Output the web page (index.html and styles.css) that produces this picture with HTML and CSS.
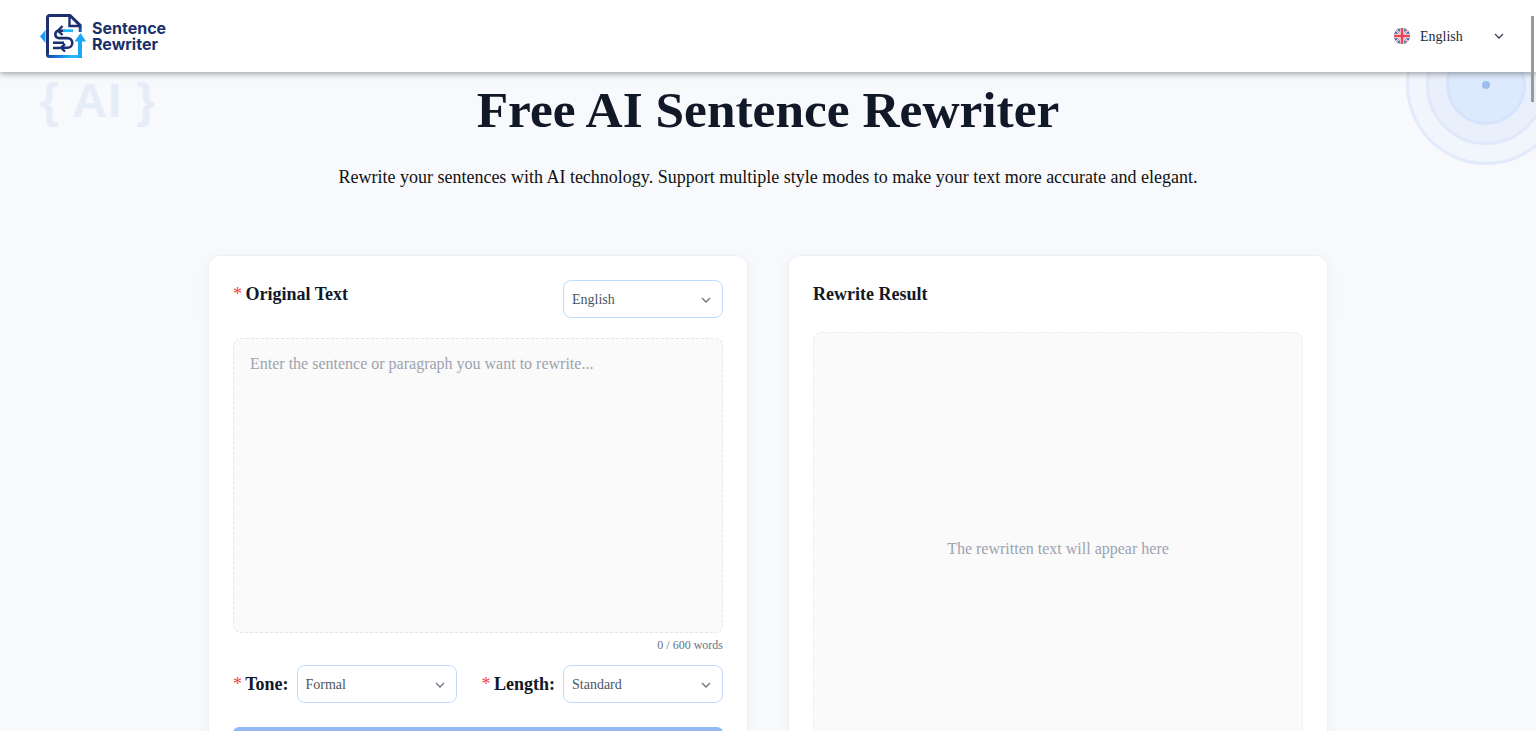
FILE: index.html
```html
<!DOCTYPE html>
<html lang="en">
<head>
    <meta charset="UTF-8">
    <meta name="viewport" content="width=device-width, initial-scale=1.0">
    <title>Free AI Sentence Rewriter</title>
    <link rel="stylesheet" href="styles.css">
</head>
<body>
    <header class="header">
        <a class="logo" href="#">
            <svg class="logo-icon" width="48" height="48" viewBox="0 0 48 48" fill="none">
                <defs>
                    <linearGradient id="docStroke" x1="0" y1="0" x2="0.7" y2="1">
                        <stop offset="0.6" stop-color="#1b2f72"/>
                        <stop offset="0.8" stop-color="#1670e0"/>
                        <stop offset="1" stop-color="#22b8f5"/>
                    </linearGradient>
                </defs>
                <path d="M40.200 20V13.500L30 3.500H9.500a2 2 0 0 0-2 2V42.500a2 2 0 0 0 2 2H38" stroke="url(#docStroke)" stroke-width="3"/>
                <path d="M29.500 4V14H40" stroke="#1b2f72" stroke-width="2.400"/>
                <path d="M5.500 18v13L0 24.500z" fill="#1e9bf5"/>
                <path d="M40.500 21L34.500 29.500H38V46H42V29.500H46z" fill="#18a8f5"/>
                <path d="M25 18.700H19a3.700 3.700 0 0 0 0 7.400H27.500a4.800 4.800 0 0 1 0 9.600H22" stroke="#1b2f72" stroke-width="2.600"/>
                <path d="M22.500 14L18 18.700L22.500 23" stroke="#1b2f72" stroke-width="2.400"/>
                <path d="M23 18.700H33" stroke="#22b8f5" stroke-width="2.800"/>
                <path d="M25 32L21 35.700L25 39.500" stroke="#1b2f72" stroke-width="2.400"/>
                <path d="M13 30.700H24M13 36H20" stroke="#1b2f72" stroke-width="2.400"/>
            </svg>
            <span class="logo-text">Sentence<br>Rewriter</span>
        </a>
        <div class="lang-switch">
            <svg class="flag" width="16" height="16" viewBox="0 0 16 16">
                <defs>
                    <clipPath id="flagClip"><circle cx="8" cy="8" r="8"/></clipPath>
                </defs>
                <g clip-path="url(#flagClip)">
                    <rect width="16" height="16" fill="#3b5ba9"/>
                    <path d="M0 0L16 16M16 0L0 16" stroke="#f3f3f3" stroke-width="2"/>
                    <path d="M0 0L16 16M16 0L0 16" stroke="#e8505b" stroke-width="0.700"/>
                    <path d="M8 0V16M0 8H16" stroke="#f3f3f3" stroke-width="4.600"/>
                    <path d="M8 0V16M0 8H16" stroke="#ee4452" stroke-width="2.600"/>
                </g>
            </svg>
            <span class="lang-name">English</span>
            <svg class="chevron chevron-dark" width="12" height="12" viewBox="0 0 12 12" fill="none"><path d="M2 4l4 4 4-4"/></svg>
        </div>
    </header>

    <div class="deco-ai">{ AI }</div>
    <div class="deco-rings">
        <div class="ring ring-outer"></div>
        <div class="ring ring-middle"></div>
        <div class="ring ring-inner"></div>
        <div class="ring-dot"></div>
    </div>
    <div class="scroll-thumb"></div>

    <main class="main">
        <section class="hero">
            <h1>Free AI Sentence Rewriter</h1>
            <p>Rewrite your sentences with AI technology. Support multiple style modes to make your text more accurate and elegant.</p>
        </section>

        <section class="cards">
            <div class="card">
                <div class="card-head">
                    <label class="field-label"><span class="req">*</span> Original Text</label>
                    <div class="select">
                        <span>English</span>
                        <svg class="chevron" width="12" height="12" viewBox="0 0 12 12" fill="none"><path d="M2 4l4 4 4-4"/></svg>
                    </div>
                </div>
                <textarea class="source-text" placeholder="Enter the sentence or paragraph you want to rewrite..."></textarea>
                <div class="word-count">0 / 600 words</div>
                <div class="options">
                    <div class="option">
                        <label class="field-label"><span class="req">*</span> Tone:</label>
                        <div class="select">
                            <span>Formal</span>
                            <svg class="chevron" width="12" height="12" viewBox="0 0 12 12" fill="none"><path d="M2 4l4 4 4-4"/></svg>
                        </div>
                    </div>
                    <div class="option">
                        <label class="field-label"><span class="req">*</span> Length:</label>
                        <div class="select">
                            <span>Standard</span>
                            <svg class="chevron" width="12" height="12" viewBox="0 0 12 12" fill="none"><path d="M2 4l4 4 4-4"/></svg>
                        </div>
                    </div>
                </div>
                <button class="rewrite-btn" disabled></button>
            </div>

            <div class="card">
                <div class="result-head">
                    <span class="field-label">Rewrite Result</span>
                </div>
                <div class="result-box">The rewritten text will appear here</div>
            </div>
        </section>
    </main>
</body>
</html>
```

FILE: styles.css
```css
* {
    box-sizing: border-box;
}

html,
body {
    margin: 0;
    height: 100vh;
    overflow: hidden;
}

body {
    position: relative;
    font-family: "Liberation Serif", serif;
    background: linear-gradient(to bottom, #f7f9fc, #f9fafb);
    color: #111827;
}

.header {
    position: relative;
    z-index: 3;
    height: 72px;
    padding: 0 31px 0 40px;
    background: #fff;
    box-shadow: 0 2px 6px rgba(0, 0, 0, 0.35);
    display: flex;
    justify-content: space-between;
    align-items: center;
}

.logo {
    display: flex;
    align-items: center;
    gap: 4px;
    text-decoration: none;
}

.logo-text {
    font-family: Inter, sans-serif;
    font-size: 16px;
    font-weight: 700;
    line-height: 16px;
    color: #1b2f6b;
}

.lang-switch {
    display: flex;
    align-items: center;
    font-size: 14px;
    color: #1f2937;
}

.lang-name {
    margin-left: 10px;
    width: 73px;
    padding-top: 1px;
}

.chevron path {
    stroke: #6b7280;
    stroke-width: 1.3;
}

.chevron-dark path {
    stroke: #374151;
}

.deco-ai {
    position: absolute;
    left: 40px;
    top: 71px;
    font-family: "Liberation Sans", sans-serif;
    font-size: 48px;
    font-weight: 700;
    line-height: 60px;
    letter-spacing: 1px;
    color: #e6edf8;
}

.deco-rings {
    position: absolute;
    left: 1406px;
    top: 5px;
    width: 160px;
    height: 160px;
}

.ring {
    position: absolute;
    border-radius: 50%;
    border: 3px solid #e2ebfb;
}

.ring-outer {
    inset: 0;
    background: #f1f5fc;
}

.ring-middle {
    inset: 20px;
    background: #e9f0fc;
    border-color: #dfe9fb;
}

.ring-inner {
    inset: 40px;
    background: #dde9fd;
    border-color: #d5e4fc;
}

.ring-dot {
    position: absolute;
    left: 76px;
    top: 76px;
    width: 8px;
    height: 8px;
    border-radius: 50%;
    background: #9dbdf3;
}

.scroll-thumb {
    position: absolute;
    z-index: 4;
    right: 2px;
    top: 16px;
    width: 3px;
    height: 86px;
    background: #999;
}

.main {
    position: relative;
    z-index: 1;
    width: 1120px;
    margin: 0 auto;
}

.hero {
    text-align: center;
    height: 183px;
}

.hero h1 {
    margin: 0;
    padding-top: 6px;
    font-size: 51.4px;
    line-height: 64px;
    color: #111827;
}

.hero p {
    margin: 0;
    padding-top: 21px;
    font-size: 18px;
    line-height: 28px;
    color: #111;
    white-space: nowrap;
}

.cards {
    display: grid;
    grid-template-columns: 540px 540px;
    gap: 40px;
}

.card {
    height: 533px;
    padding: 24px;
    background: #fff;
    border: 1px solid #eef0f4;
    border-radius: 12px;
    box-shadow: 0 4px 16px rgba(30, 50, 90, 0.05);
}

.card-head {
    display: flex;
    justify-content: space-between;
    align-items: flex-start;
    margin-bottom: 20px;
}

.field-label {
    font-size: 18px;
    font-weight: 700;
    line-height: 28px;
    color: #111827;
    white-space: nowrap;
}

.req {
    margin-right: -1px;
    color: #ef4444;
    font-weight: 400;
}

.select {
    width: 160px;
    height: 38px;
    padding: 1px 10px 0 8px;
    background: #fff;
    border: 1px solid #bfdbfe;
    border-radius: 8px;
    display: flex;
    justify-content: space-between;
    align-items: center;
    font-size: 14px;
    color: #4b5563;
}

.source-text {
    display: block;
    width: 100%;
    height: 295px;
    padding: 16px;
    resize: none;
    background: #fafafa;
    border: 1px dashed #e3e5e8;
    border-radius: 8px;
    font-family: "Liberation Serif", serif;
    font-size: 16px;
    line-height: 18px;
    outline: none;
}

.source-text::placeholder {
    color: #9ca3af;
    opacity: 1;
}

.word-count {
    margin-top: 5px;
    height: 14px;
    text-align: right;
    font-size: 12px;
    line-height: 14px;
    color: #6b7280;
}

.options {
    margin-top: 13px;
    display: flex;
    justify-content: space-between;
}

.option {
    display: flex;
    align-items: center;
    gap: 8px;
}

.rewrite-btn {
    display: block;
    width: 100%;
    height: 38px;
    margin-top: 24px;
    background: #93b9f8;
    border: none;
    border-radius: 6px;
}

.result-head {
    height: 28px;
    margin-bottom: 24px;
}

.result-box {
    height: 432px;
    padding-top: 2px;
    background: #fafafa;
    border: 1px dashed #eceef1;
    border-radius: 8px;
    display: flex;
    justify-content: center;
    align-items: center;
    font-size: 16px;
    color: #9ca3af;
}
```
